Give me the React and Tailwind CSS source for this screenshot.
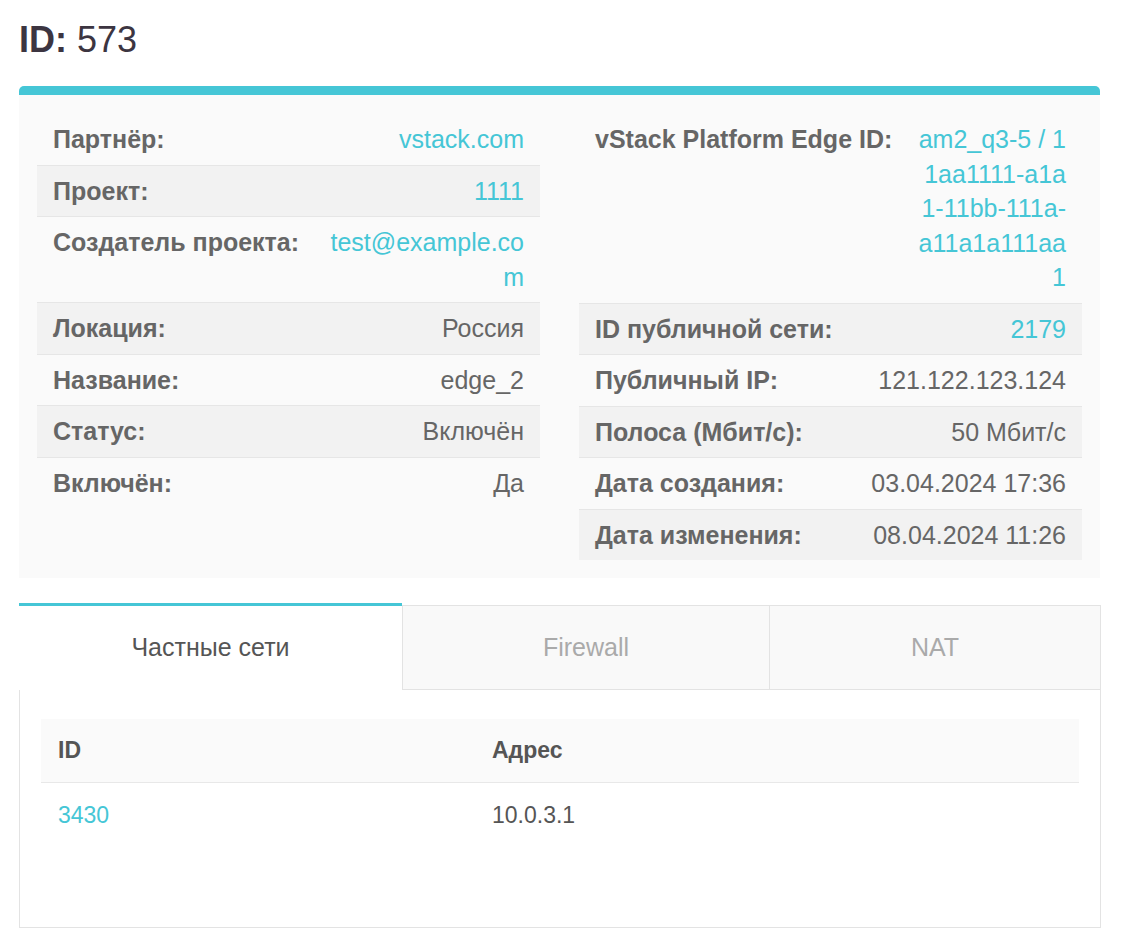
import React from 'react';

const teal = 'text-[#45c6d6]';

const leftRows = [
  { label: 'Партнёр:', value: 'vstack.com', link: true },
  { label: 'Проект:', value: '1111', link: true },
  { label: 'Создатель проекта:', value: 'test@example.com', link: true },
  { label: 'Локация:', value: 'Россия' },
  { label: 'Название:', value: 'edge_2' },
  { label: 'Статус:', value: 'Включён' },
  { label: 'Включён:', value: 'Да' },
];

const rightRows = [
  { label: 'vStack Platform Edge ID:', value: 'am2_q3-5 / 11aa1111-a1a1-11bb-111a-a11a1a111aa1', link: true },
  { label: 'ID публичной сети:', value: '2179', link: true },
  { label: 'Публичный IP:', value: '121.122.123.124' },
  { label: 'Полоса (Мбит/с):', value: '50 Мбит/с' },
  { label: 'Дата создания:', value: '03.04.2024 17:36' },
  { label: 'Дата изменения:', value: '08.04.2024 11:26' },
];

function InfoList({ rows }) {
  return (
    <div className="flex flex-col">
      {rows.map((r, i) => (
        <div
          key={r.label}
          className={`flex gap-[22px] px-4 py-2 ${i > 0 ? 'border-t border-[#e6e6e6]' : ''} ${i % 2 === 1 ? 'bg-[#f2f2f2]' : ''}`}
        >
          <div className="shrink-0 whitespace-nowrap font-bold text-[#666666]">{r.label}</div>
          <div className={`flex-1 min-w-0 text-right break-all ${r.link ? teal : 'text-[#666666]'}`}>
            {r.value}
          </div>
        </div>
      ))}
    </div>
  );
}

export default function App() {
  return (
    <div
      className="min-h-screen bg-white pl-[19px] pt-[18px] pb-6"
      style={{ fontFamily: '"Liberation Sans", Arial, sans-serif' }}
    >
      <h1 className="text-[36px] leading-[43px] text-[#3c3541]">
        <span className="font-bold">ID:</span> 573
      </h1>

      {/* summary card */}
      <div className="mt-[25px] w-[1081px] rounded-t-[5px] border-t-[9px] border-[#45c6d6] bg-[#fafafa] px-[18px] pt-[19px] pb-[18px] flex items-start gap-[39px] text-[25px] leading-[34.5px]">
        <div className="w-[503px]">
          <InfoList rows={leftRows} />
        </div>
        <div className="w-[503px]">
          <InfoList rows={rightRows} />
        </div>
      </div>

      {/* tabs */}
      <div className="mt-[25px] w-[1082px] flex items-end text-[25px]">
        <div className="w-[383px] h-[87px] border-t-[3px] border-[#45c6d6] bg-white flex items-center justify-center text-[#555555]">
          Частные сети
        </div>
        <div className="w-[368px] h-[85px] border border-[#e3e3e3] bg-[#f9f9f9] flex items-center justify-center text-[#aaaaaa]">
          Firewall
        </div>
        <div className="flex-1 h-[85px] border-y border-r border-[#e3e3e3] bg-[#f9f9f9] flex items-center justify-center text-[#aaaaaa]">
          NAT
        </div>
      </div>
      <div className="w-[1082px] border-x border-b border-[#e3e3e3] px-[21px] pt-[29px] pb-[79px] text-[23px] leading-[35px]">
        <table className="w-full border-collapse">
          <thead>
            <tr className="bg-[#fafafa] border-b border-[#e8e8e8]">
              <th className="w-[434px] text-left font-bold text-[#555555] px-[17px] py-[14px]">ID</th>
              <th className="text-left font-bold text-[#555555] px-[17px] py-[14px]">Адрес</th>
            </tr>
          </thead>
          <tbody>
            <tr>
              <td className={`px-[17px] py-[15px] ${teal}`}>3430</td>
              <td className="px-[17px] py-[15px] text-[#555555]">10.0.3.1</td>
            </tr>
          </tbody>
        </table>
      </div>
    </div>
  );
}
